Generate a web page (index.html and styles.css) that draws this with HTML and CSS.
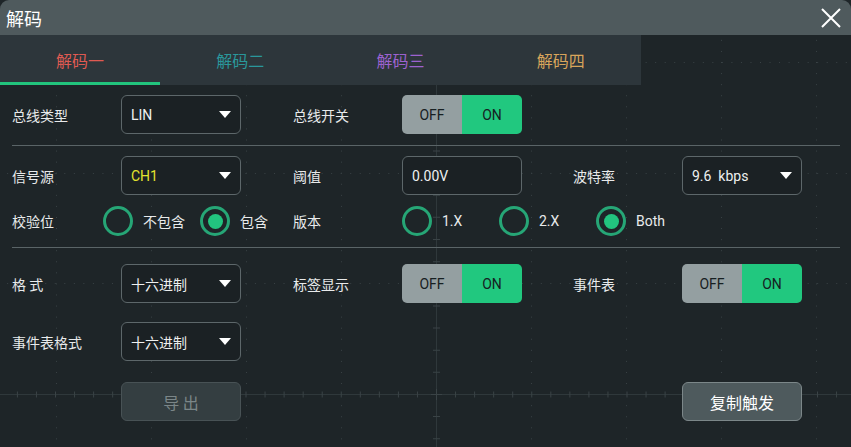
FILE: index.html
```html
<!DOCTYPE html>
<html lang="zh">
<head>
<meta charset="utf-8">
<title>解码</title>
<link rel="stylesheet" href="styles.css">
</head>
<body>
<div class="window">
  <header class="titlebar">
    <span class="title">解码</span>
    <svg class="close" width="20" height="20" viewBox="0 0 20 20"><path d="M1 1 L19 19 M19 1 L1 19" stroke="#fff" stroke-width="2" fill="none"/></svg>
  </header>
  <div class="body">
    <svg class="grid" width="851" height="412" viewBox="0 0 851 412">
      <g stroke="#394245" stroke-width="1" stroke-dasharray="1 10.07" fill="none">
        <line x1="56.5" y1="-6.2" x2="56.5" y2="412"/>
        <line x1="151.5" y1="-6.2" x2="151.5" y2="412"/>
        <line x1="246.5" y1="-6.2" x2="246.5" y2="412"/>
        <line x1="341.5" y1="-6.2" x2="341.5" y2="412"/>
        <line x1="531.5" y1="-6.2" x2="531.5" y2="412"/>
        <line x1="626.5" y1="-6.2" x2="626.5" y2="412"/>
        <line x1="721.5" y1="-6.2" x2="721.5" y2="412"/>
        <line x1="816.5" y1="-6.2" x2="816.5" y2="412"/>
      </g>
      <g stroke="#394245" stroke-width="1" stroke-dasharray="1 8.53" fill="none">
        <line x1="-2.4" y1="27.5" x2="851" y2="27.5"/>
        <line x1="-2.4" y1="138.5" x2="851" y2="138.5"/>
        <line x1="-2.4" y1="248.5" x2="851" y2="248.5"/>
      </g>
      <g stroke="#2f383b" stroke-width="1" fill="none">
        <line x1="436.5" y1="0" x2="436.5" y2="412"/>
        <line x1="0" y1="359.5" x2="851" y2="359.5"/>
      </g>
      <g stroke="#3a4346" fill="none">
        <line x1="-2.15" y1="359.5" x2="851" y2="359.5" stroke-width="6" stroke-dasharray="1 18.05"/>
        <line x1="436.5" y1="-17.4" x2="436.5" y2="412" stroke-width="7" stroke-dasharray="1 21.14"/>
        <line x1="431" y1="359.5" x2="442" y2="359.5" stroke-width="1"/>
        <line x1="436.5" y1="354" x2="436.5" y2="365" stroke-width="1"/>
      </g>
    </svg>
    <nav class="tabs">
      <div class="tab active t1">解码一</div>
      <div class="tab t2">解码二</div>
      <div class="tab t3">解码三</div>
      <div class="tab t4">解码四</div>
    </nav>
    <div class="content">
      <div class="row">
        <div class="field">
          <span class="label">总线类型</span>
          <div class="select"><span>LIN</span><i class="caret"></i></div>
        </div>
        <div class="field">
          <span class="label">总线开关</span>
          <div class="toggle"><span class="off">OFF</span><span class="on">ON</span></div>
        </div>
      </div>
      <div class="sep"></div>
      <div class="row">
        <div class="field">
          <span class="label">信号源</span>
          <div class="select"><span class="yellow">CH1</span><i class="caret"></i></div>
        </div>
        <div class="field">
          <span class="label">阈值</span>
          <div class="select input"><span>0.00V</span></div>
        </div>
        <div class="field">
          <span class="label">波特率</span>
          <div class="select"><span>9.6&nbsp; kbps</span><i class="caret"></i></div>
        </div>
      </div>
      <div class="row radio-row">
        <div class="field">
          <span class="label short">校验位</span>
          <div class="radio"><i class="circle"></i><span>不包含</span></div>
          <div class="radio"><i class="circle checked"></i><span>包含</span></div>
        </div>
        <div class="field">
          <span class="label">版本</span>
          <div class="radio"><i class="circle"></i><span>1.X</span></div>
          <div class="radio"><i class="circle"></i><span>2.X</span></div>
          <div class="radio"><i class="circle checked"></i><span>Both</span></div>
        </div>
      </div>
      <div class="sep"></div>
      <div class="row row4">
        <div class="field">
          <span class="label">格 式</span>
          <div class="select"><span>十六进制</span><i class="caret"></i></div>
        </div>
        <div class="field">
          <span class="label">标签显示</span>
          <div class="toggle"><span class="off">OFF</span><span class="on">ON</span></div>
        </div>
        <div class="field">
          <span class="label">事件表</span>
          <div class="toggle"><span class="off">OFF</span><span class="on">ON</span></div>
        </div>
      </div>
      <div class="row row5">
        <div class="field">
          <span class="label">事件表格式</span>
          <div class="select"><span>十六进制</span><i class="caret"></i></div>
        </div>
      </div>
      <div class="row row6">
        <div class="field">
          <span class="label"></span>
          <button class="btn disabled">导 出</button>
        </div>
        <div class="field">
          <span class="label"></span>
        </div>
        <div class="field">
          <span class="label"></span>
          <button class="btn">复制触发</button>
        </div>
      </div>
    </div>
  </div>
</div>
</body>
</html>
```

FILE: styles.css
```css
* { box-sizing: border-box; }
html, body {
  margin: 0;
  padding: 0;
  background: #1e2528;
}
body {
  font-family: Roboto, "Noto Sans CJK SC", sans-serif;
  color: #e8eaeb;
  font-size: 14px;
}
.window {
  width: 851px;
  height: 447px;
  overflow: hidden;
  background: #1e2528;
}
.titlebar {
  height: 35px;
  background: #4f5a5d;
  border-radius: 9px 9px 0 0;
  display: flex;
  align-items: center;
  justify-content: space-between;
  padding: 0 10px 0 6px;
}
.title {
  font-family: "Noto Sans CJK SC", sans-serif;
  font-size: 18px;
  color: #ffffff;
  line-height: 1;
}
.close { display: block; }
.body {
  position: relative;
  height: 412px;
}
.grid {
  position: absolute;
  left: 0;
  top: 0;
}
.tabs {
  position: relative;
  display: flex;
  width: 641px;
  height: 50px;
  background: #2d363b;
}
.tab {
  flex: 1;
  display: flex;
  align-items: center;
  justify-content: center;
  font-family: "Noto Sans CJK SC", sans-serif;
  font-size: 16px;
  padding-bottom: 1px;
}
.tab.active { box-shadow: inset 0 -3px 0 #22c47d; }
.t1 { color: #df5a52; }
.t2 { color: #2a979b; }
.t3 { color: #9c62cf; }
.t4 { color: #d8a55b; }
.content {
  position: relative;
  padding: 10px 11px 0 12px;
}
.row {
  display: flex;
  height: 39px;
  align-items: center;
}
.field {
  width: 281px;
  display: flex;
  align-items: center;
  flex: none;
}
.field:nth-child(2) { width: 280px; }
.field:last-child { width: auto; }
.label {
  width: 109px;
  flex: none;
  font-family: "Noto Sans CJK SC", sans-serif;
  font-size: 14px;
  color: #e8eaeb;
}
.label.short { width: 91px; }
.select {
  width: 120px;
  height: 39px;
  border: 1px solid #5d676a;
  border-radius: 6px;
  background: #1b2124;
  display: flex;
  align-items: center;
  padding: 0 9px 0 9px;
  font-size: 14px;
  color: #eef0f0;
  font-family: Roboto, "Noto Sans CJK SC", sans-serif;
}
.select .caret {
  margin-left: auto;
  width: 0;
  height: 0;
  border-left: 6px solid transparent;
  border-right: 6px solid transparent;
  border-top: 7px solid #ffffff;
}
.yellow { color: #e4e42e; }
.toggle {
  width: 120px;
  height: 39px;
  border-radius: 5px;
  overflow: hidden;
  display: flex;
  font-size: 14px;
  color: #172022;
}
.toggle span {
  flex: 1;
  display: flex;
  align-items: center;
  justify-content: center;
}
.toggle .off { background: #949fa1; }
.toggle .on { background: #21c87f; }
.sep {
  height: 1px;
  background: #5a6467;
  margin: 11px 0 10px;
}
.radio-row {
  height: 30px;
  margin-top: 11px;
  margin-bottom: 11px;
}
.radio {
  width: 97px;
  flex: none;
  display: flex;
  align-items: center;
  gap: 10px;
}
.radio span {
  font-family: Roboto, "Noto Sans CJK SC", sans-serif;
  font-size: 14px;
  color: #e8eaeb;
}
.circle {
  width: 30px;
  height: 30px;
  border-radius: 50%;
  border: 3px solid #26a676;
  flex: none;
  display: flex;
  align-items: center;
  justify-content: center;
}
.circle.checked::before {
  content: "";
  width: 15px;
  height: 15px;
  border-radius: 50%;
  background: #22c47f;
}
.radio-row + .sep { margin-top: 0; margin-bottom: 16px; }
.row5 { margin-top: 19px; }
.row6 { margin-top: 21px; }
.btn {
  width: 120px;
  height: 39px;
  border-radius: 6px;
  font-family: "Noto Sans CJK SC", sans-serif;
  font-size: 16px;
  background: #4e5a5d;
  border: 1px solid #7c8789;
  color: #ffffff;
  padding: 0;
}
.btn.disabled {
  background: #343e41;
  border-color: #485255;
  color: #7b8688;
}
```
